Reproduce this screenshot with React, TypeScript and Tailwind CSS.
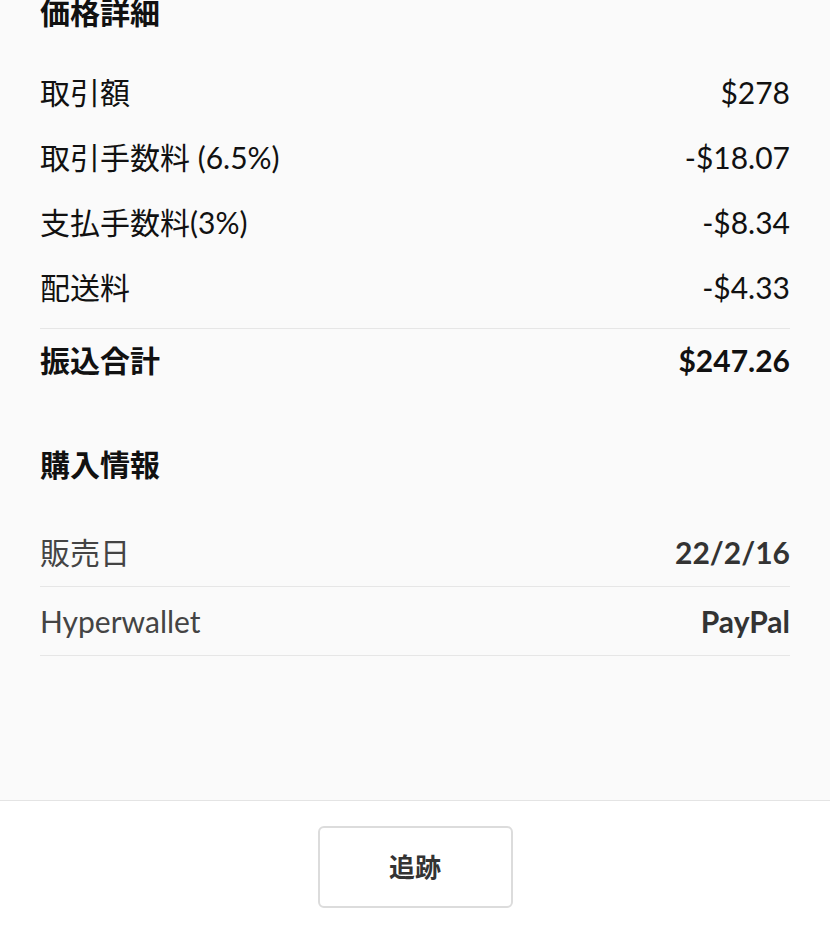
const fontStack = { fontFamily: 'Lato, "Noto Sans CJK JP", sans-serif' };

type Row = { label: string; value: string };

const priceRows: Row[] = [
  { label: '取引額', value: '$278' },
  { label: '取引手数料 (6.5%)', value: '-$18.07' },
  { label: '支払手数料(3%)', value: '-$8.34' },
  { label: '配送料', value: '-$4.33' },
];

const purchaseRows: Row[] = [
  { label: '販売日', value: '22/2/16' },
  { label: 'Hyperwallet', value: 'PayPal' },
];

export default function App() {
  return (
    <div
      className="w-[830px] h-[925px] flex flex-col bg-[#fafafa] text-[#111] overflow-hidden"
      style={fontStack}
    >
      <div className="flex-1 px-10 flex flex-col">
        {/* 価格詳細 */}
        <h2 className="h-[24px] leading-[24px] text-[30px] font-bold">価格詳細</h2>
        <div className="mt-[36px] flex flex-col">
          {priceRows.map((r) => (
            <div key={r.label} className="h-[65px] flex items-center justify-between text-[30px]">
              <span>{r.label}</span>
              <span>{r.value}</span>
            </div>
          ))}
        </div>
        <div className="mt-[8px] border-t border-[#e6e6e6] h-[64px] flex items-center justify-between text-[30px] font-bold">
          <span>振込合計</span>
          <span>$247.26</span>
        </div>

        {/* 購入情報 */}
        <h2 className="mt-[60px] h-[24px] leading-[24px] text-[30px] font-bold">購入情報</h2>
        <div className="mt-[42px] flex flex-col">
          {purchaseRows.map((r) => (
            <div
              key={r.label}
              className="h-[69px] flex items-center justify-between border-b border-[#e6e6e6] text-[30px]"
            >
              <span className="text-[#444]">{r.label}</span>
              <span className="font-bold text-[#333]">{r.value}</span>
            </div>
          ))}
        </div>
      </div>

      {/* Footer */}
      <div className="h-[125px] bg-white border-t border-[#e4e4e4] flex justify-center pt-[25px]">
        <button className="w-[195px] h-[82px] border-2 border-[#dcdcdc] rounded-[6px] bg-white text-[26px] font-bold text-[#333]">
          追跡
        </button>
      </div>
    </div>
  );
}
